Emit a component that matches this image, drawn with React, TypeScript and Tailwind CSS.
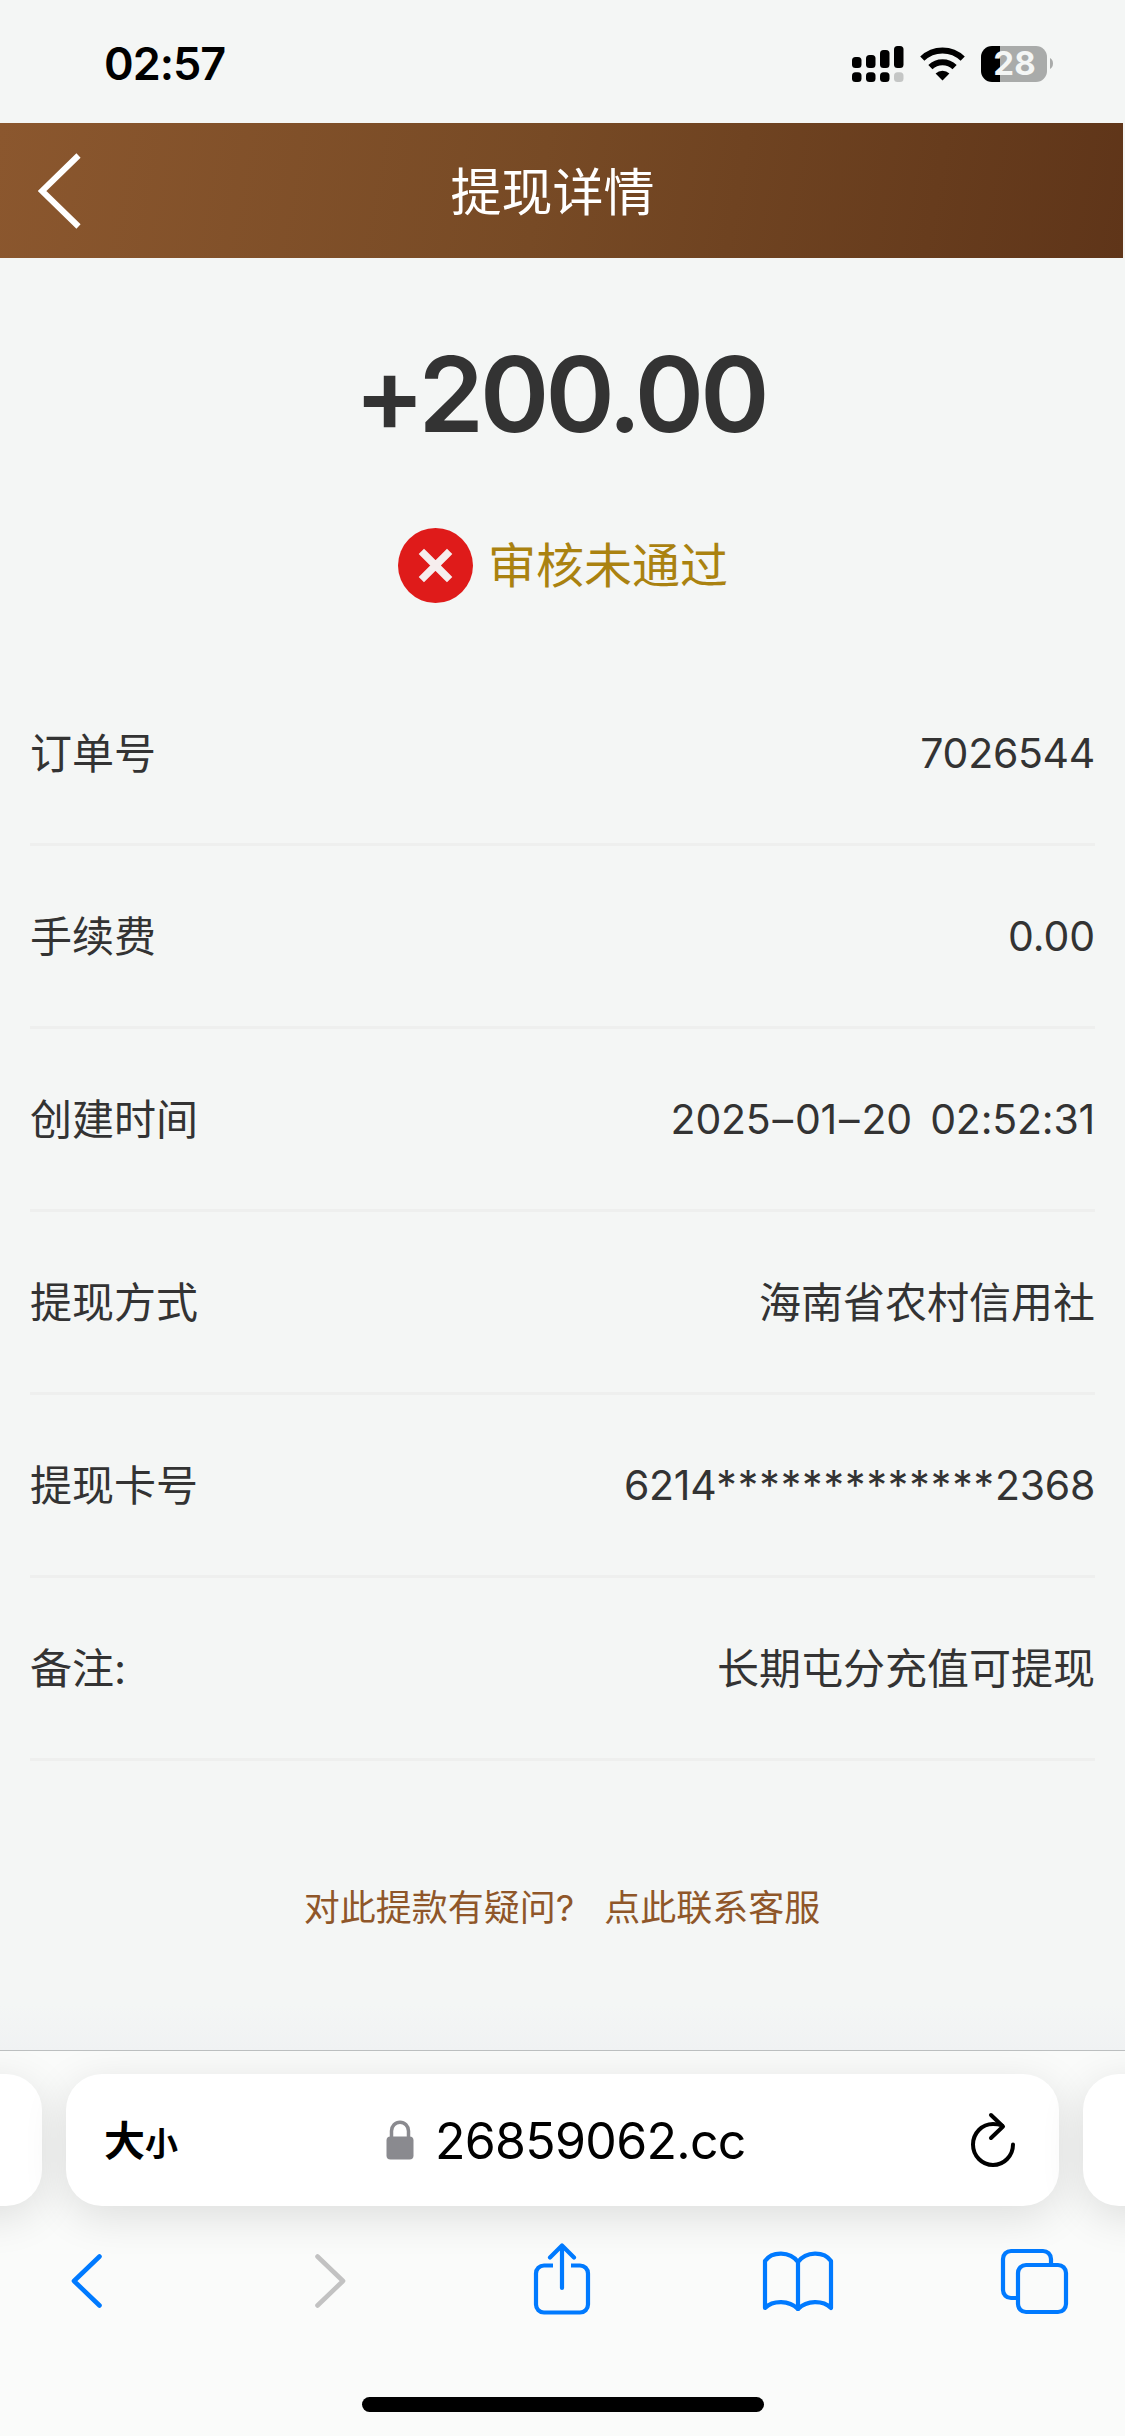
import { ReactNode } from "react";

interface IRow {
  label: string;
  value: ReactNode;
}

const rows: IRow[] = [
  {
    label: "订单号",
    value: <span className="tracking-[-0.3px]">7026544</span>,
  },
  {
    label: "手续费",
    value: <span className="tracking-[-0.1px]">0.00</span>,
  },
  {
    label: "创建时间",
    value: (
      <span className="tracking-[-0.2px] [word-spacing:7px]">
        2025<span className="mx-[2px]">–</span>01
        <span className="mx-[2px]">–</span>20 02:52:31
      </span>
    ),
  },
  {
    label: "提现方式",
    value: <span className="text-[42px]">海南省农村信用社</span>,
  },
  {
    label: "提现卡号",
    value: (
      <span className="tracking-[-0.3px]">
        6214<span className="tracking-[0.9px]">*************</span>2368
      </span>
    ),
  },
  {
    label: "备注:",
    value: <span className="text-[42px]">长期屯分充值可提现</span>,
  },
];

const signalBars = [
  { x: 0, y: 11, h: 11 },
  { x: 14, y: 9, h: 13 },
  { x: 28, y: 4, h: 18 },
  { x: 42, y: 0, h: 22 },
];

const StatusBar = () => {
  return (
    <div className="flex h-[123px] items-center justify-between pl-[104px] pr-[72px] pt-[4px] text-black">
      <span className="text-[45px] font-semibold leading-none tracking-[-1px]">
        02:57
      </span>
      <div className="flex items-center">
        <svg width="52" height="36" viewBox="0 0 52 36">
          {signalBars.map((bar) => (
            <g key={bar.x}>
              <rect x={bar.x} y={bar.y} width="9.5" height={bar.h} rx="3.5" />
              <rect
                x={bar.x}
                y="26.3"
                width="9.5"
                height="9.7"
                rx="3.5"
                fill={bar.x === 42 ? "#c4c6c5" : "#000"}
              />
            </g>
          ))}
        </svg>
        <svg className="ml-4" width="45" height="34" viewBox="0 0 45 34">
          <path d="M22.5 33.5L15.6 26.4a10 10 0 0 1 13.8 0z" />
          <path
            d="M10.4 20.1a17.5 17.5 0 0 1 24.2 0M2.3 11.6a29 29 0 0 1 40.4 0"
            fill="none"
            stroke="#000"
            strokeWidth="6"
          />
        </svg>
        <div className="ml-4 flex h-9 w-[66px] items-center justify-center rounded-[11px] bg-[linear-gradient(90deg,#000_19px,#a9abaa_19px)]">
          <span className="pl-px text-[33px] font-bold leading-none text-[#f4f6f5]">
            28
          </span>
        </div>
        <svg className="ml-[3px]" width="3" height="11" viewBox="0 0 3 11">
          <path d="M0 0c4 2 4 9 0 11z" fill="#a9abaa" />
        </svg>
      </div>
    </div>
  );
};

const Header = () => {
  return (
    <header className="mr-[2px] grid h-[135px] grid-cols-[1fr_auto_1fr] items-center bg-[linear-gradient(100deg,#8b572e_0%,#774a25_48%,#5f3519_100%)]">
      <svg className="ml-[38px]" width="46" height="76" viewBox="0 0 46 76">
        <path
          d="M40.500 2.500L4 38l36.500 35.500"
          fill="none"
          stroke="#fff"
          strokeWidth="6"
        />
      </svg>
      <h1 className="pt-[3px] pr-[18px] text-[51px] leading-none text-white">
        提现详情
      </h1>
    </header>
  );
};

const AddressBar = () => {
  return (
    <div className="flex justify-center gap-6">
      <div className="h-[132px] w-[200px] shrink-0 rounded-[36px] bg-white shadow-[0_10px_44px_rgba(0,0,0,0.12)]" />
      <div className="flex h-[132px] w-[993px] shrink-0 items-center rounded-[36px] bg-white pl-[38px] pr-[43px] text-black shadow-[0_10px_44px_rgba(0,0,0,0.12)]">
        <div className="flex w-[282px] items-baseline pt-[3px] font-bold leading-none">
          <span className="text-[41px]">大</span>
          <span className="text-[33px]">小</span>
        </div>
        <svg width="28" height="40" viewBox="0 0 28 40">
          <rect x="0.500" y="16.500" width="27" height="23" rx="4" fill="#8a8a8f" />
          <path
            d="M5.500 18v-7a8.500 8.800 0 0 1 17 0v7"
            fill="none"
            stroke="#8a8a8f"
            strokeWidth="3.500"
          />
        </svg>
        <span className="ml-[21px] pt-[2px] text-[50px] leading-none tracking-[-0.7px]">
          26859062.cc
        </span>
        <svg
          className="ml-auto"
          width="46"
          height="56"
          viewBox="0 0 46 56"
          fill="none"
          stroke="#000"
          strokeWidth="4"
          strokeLinecap="round"
          strokeLinejoin="round"
        >
          <path d="M43 32.500A20 20.500 0 1 1 23 12q5 0 9 1.500" />
          <path d="M21 3l12 11.500L21 26" />
        </svg>
      </div>
      <div className="h-[132px] w-[200px] shrink-0 rounded-[36px] bg-white shadow-[0_10px_44px_rgba(0,0,0,0.12)]" />
    </div>
  );
};

const Toolbar = () => {
  return (
    <div className="mt-[35px] flex h-20 items-center pl-[70px]">
      <svg width="34" height="58" viewBox="0 0 34 58" fill="none">
        <path
          d="M29.500 4.500L4 29l25.500 24.500"
          stroke="#007aff"
          strokeWidth="4.600"
          strokeLinecap="round"
          strokeLinejoin="round"
        />
      </svg>
      <svg
        className="ml-[209px]"
        width="34"
        height="58"
        viewBox="0 0 34 58"
        fill="none"
      >
        <path
          d="M4.500 4.500L30 29 4.500 53.500"
          stroke="#c2c2c2"
          strokeWidth="4.600"
          strokeLinecap="round"
          strokeLinejoin="round"
        />
      </svg>
      <svg
        className="mb-1 ml-[186px]"
        width="58"
        height="74"
        viewBox="0 0 58 74"
        fill="none"
        stroke="#007aff"
        strokeWidth="4.200"
      >
        <path d="M20 23.500h-9a8 8 0 0 0-8 8v31a8 8 0 0 0 8 8h36a8 8 0 0 0 8-8v-31a8 8 0 0 0-8-8h-9" />
        <path
          d="M29 46V4M17 15.500L29 3.500l12 12"
          strokeLinecap="round"
          strokeLinejoin="round"
        />
      </svg>
      <svg
        className="ml-[171px]"
        width="72"
        height="60"
        viewBox="0 0 72 60"
        fill="none"
        stroke="#007aff"
        strokeWidth="4.200"
        strokeLinecap="round"
        strokeLinejoin="round"
      >
        <path d="M36 11C28 0 10 0 3 10v47c8-8 24-8 33 1 9-9 25-9 33-1V10C62 0 44 0 36 11z" />
        <path d="M36 12v46" />
      </svg>
      <svg
        className="ml-[166px]"
        width="69"
        height="67"
        viewBox="0 0 69 67"
        fill="none"
        stroke="#007aff"
        strokeWidth="4.200"
      >
        <path d="M17 50h-6a8 8 0 0 1-8-8V11a8 8 0 0 1 8-8h32a8 8 0 0 1 8 8v6" />
        <rect x="18" y="17" width="48" height="47" rx="8" />
      </svg>
    </div>
  );
};

const App = () => {
  return (
    <div className="flex h-[2436px] w-[1125px] flex-col overflow-hidden bg-[#f4f6f5] font-[Inter,'Noto_Sans_CJK_SC',sans-serif] text-[#333]">
      <StatusBar />
      <Header />

      <main className="flex flex-1 flex-col bg-[linear-gradient(0deg,#f0f2f3,#f4f6f5_45px)]">
        <p className="mt-[83px] mb-[2px] pr-[5px] text-center text-[105px] font-semibold leading-[105px] tracking-[-3.8px]">
          +200.00
        </p>
        <div className="mt-20 flex h-[75px] items-center justify-center gap-[15px] pl-px">
          <svg width="75" height="75" viewBox="0 0 75 75">
            <circle cx="37.500" cy="37.500" r="37.500" fill="#df1b1a" />
            <path
              d="M26 26l23 23M49 26L26 49"
              stroke="#f6eeee"
              strokeWidth="7.500"
              strokeLinecap="square"
            />
          </svg>
          <span className="text-[48px] leading-none text-[#aa8210]">
            审核未通过
          </span>
        </div>

        <ul className="mx-[30px] mt-[60px]">
          {rows.map((row) => (
            <li
              key={row.label}
              className="flex h-[183px] items-center justify-between border-b-[3px] border-[#eeefee] pt-px text-[41px] leading-none"
            >
              <span className="text-[42px]">{row.label}</span>
              {row.value}
            </li>
          ))}
        </ul>

        <p className="mt-[129px] flex justify-center gap-[30px] pr-px text-[36px] leading-none text-[#8f5629]">
          <span>对此提款有疑问?</span>
          <span>点此联系客服</span>
        </p>
      </main>

      <footer className="h-[386px] overflow-hidden border-t border-[#bcbfc0] bg-[#fafbfa] pt-[23px]">
        <AddressBar />
        <Toolbar />
        <div className="mx-auto mt-[76px] h-[15px] w-[402px] rounded-full bg-black" />
      </footer>
    </div>
  );
};

export default App;
